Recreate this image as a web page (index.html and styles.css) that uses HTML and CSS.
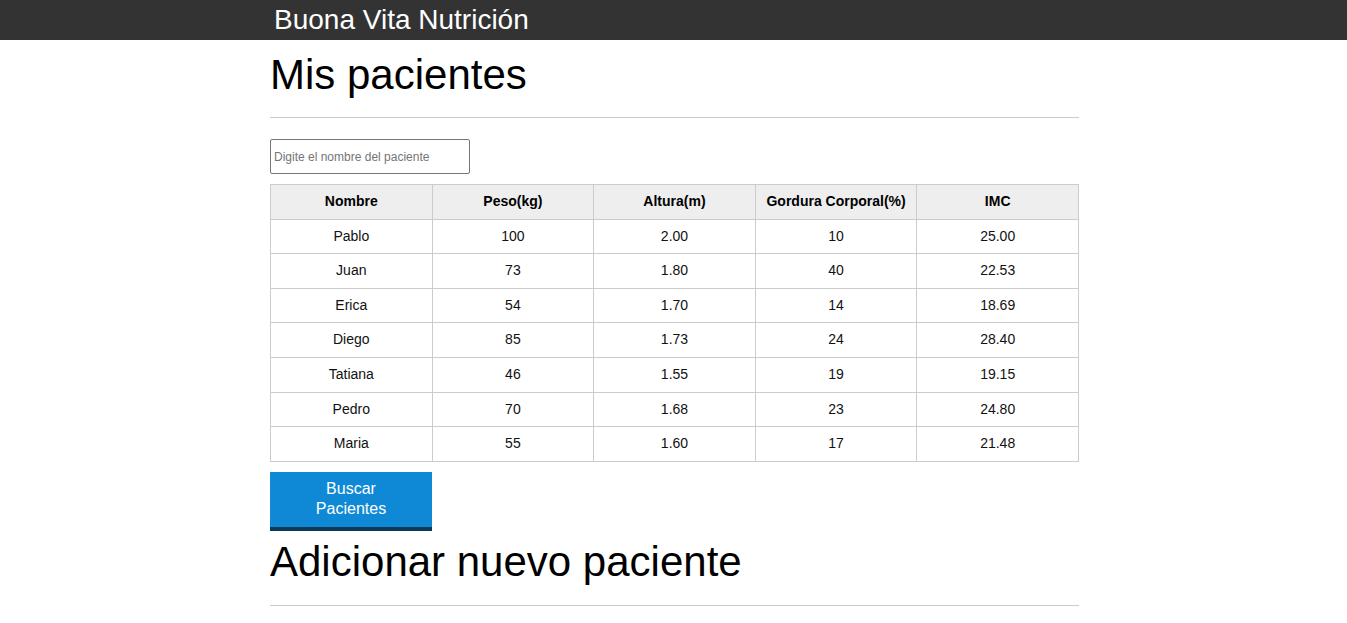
FILE: index.html
```html
<!DOCTYPE html>
<html lang="es">
<head>
<meta charset="utf-8">
<title>Buona Vita Nutrición</title>
<link rel="stylesheet" href="styles.css">
</head>
<body>
<header class="topbar">
  <div class="container">
    <span class="brand">Buona Vita Nutrición</span>
  </div>
</header>
<main class="container">
  <section>
    <h1 class="section-title first">Mis pacientes</h1>
    <hr class="rule">
    <input class="search" type="text" placeholder="Digite el nombre del paciente">
    <table class="patients">
      <thead>
        <tr><th>Nombre</th><th>Peso(kg)</th><th>Altura(m)</th><th>Gordura Corporal(%)</th><th>IMC</th></tr>
      </thead>
      <tbody>
        <tr><td>Pablo</td><td>100</td><td>2.00</td><td>10</td><td>25.00</td></tr>
        <tr><td>Juan</td><td>73</td><td>1.80</td><td>40</td><td>22.53</td></tr>
        <tr><td>Erica</td><td>54</td><td>1.70</td><td>14</td><td>18.69</td></tr>
        <tr><td>Diego</td><td>85</td><td>1.73</td><td>24</td><td>28.40</td></tr>
        <tr><td>Tatiana</td><td>46</td><td>1.55</td><td>19</td><td>19.15</td></tr>
        <tr><td>Pedro</td><td>70</td><td>1.68</td><td>23</td><td>24.80</td></tr>
        <tr><td>Maria</td><td>55</td><td>1.60</td><td>17</td><td>21.48</td></tr>
      </tbody>
    </table>
    <button class="btn" type="button">Buscar Pacientes</button>
  </section>
  <section>
    <h1 class="section-title second">Adicionar nuevo paciente</h1>
    <hr class="rule">
  </section>
</main>
</body>
</html>
```
FILE: styles.css
```css
html, body {
  margin: 0;
  padding: 0;
  background: #fff;
  font-family: "Liberation Sans", Arial, sans-serif;
  color: #000;
}

.container {
  width: 809px;
  margin: 0 auto 0 calc(50% - 403.5px);
}

.topbar {
  background: #333333;
  height: 40px;
}

.brand {
  display: block;
  color: #fff;
  font-size: 28px;
  line-height: 40px;
  padding-left: 4px;
}

.section-title {
  font-size: 42px;
  font-weight: normal;
  margin: 0;
}

.section-title.first {
  margin-top: 11px;
  margin-bottom: 18px;
}

.section-title.second {
  margin-top: 7px;
  margin-bottom: 19px;
}

.rule {
  border: 0;
  border-top: 1px solid #cccccc;
  margin: 0;
}

.search {
  display: block;
  box-sizing: border-box;
  width: 200px;
  height: 35px;
  margin-top: 21px;
  padding: 0 3px;
  border: 1px solid #767676;
  border-radius: 2px;
  font-family: "Liberation Sans", Arial, sans-serif;
  font-size: 12px;
  color: #000;
}

.search::placeholder {
  color: #757575;
}

.patients {
  width: 100%;
  margin-top: 10px;
  border-collapse: collapse;
  table-layout: fixed;
  font-size: 14px;
}

.patients th,
.patients td {
  border: 1px solid #cccccc;
  text-align: center;
  padding: 8px 0;
  line-height: 17.6px;
  color: #111;
}

.patients th {
  background: #eeeeee;
  font-weight: bold;
  color: #000;
}

.btn {
  display: block;
  box-sizing: border-box;
  width: 162px;
  margin-top: 10px;
  padding: 7px 20px 8px;
  border: 0;
  border-bottom: 4px solid #0a3a58;
  background: #0f89d5;
  color: #fff;
  font-family: "Liberation Sans", Arial, sans-serif;
  font-size: 16px;
  line-height: 20px;
  text-align: center;
  cursor: pointer;
}
```
